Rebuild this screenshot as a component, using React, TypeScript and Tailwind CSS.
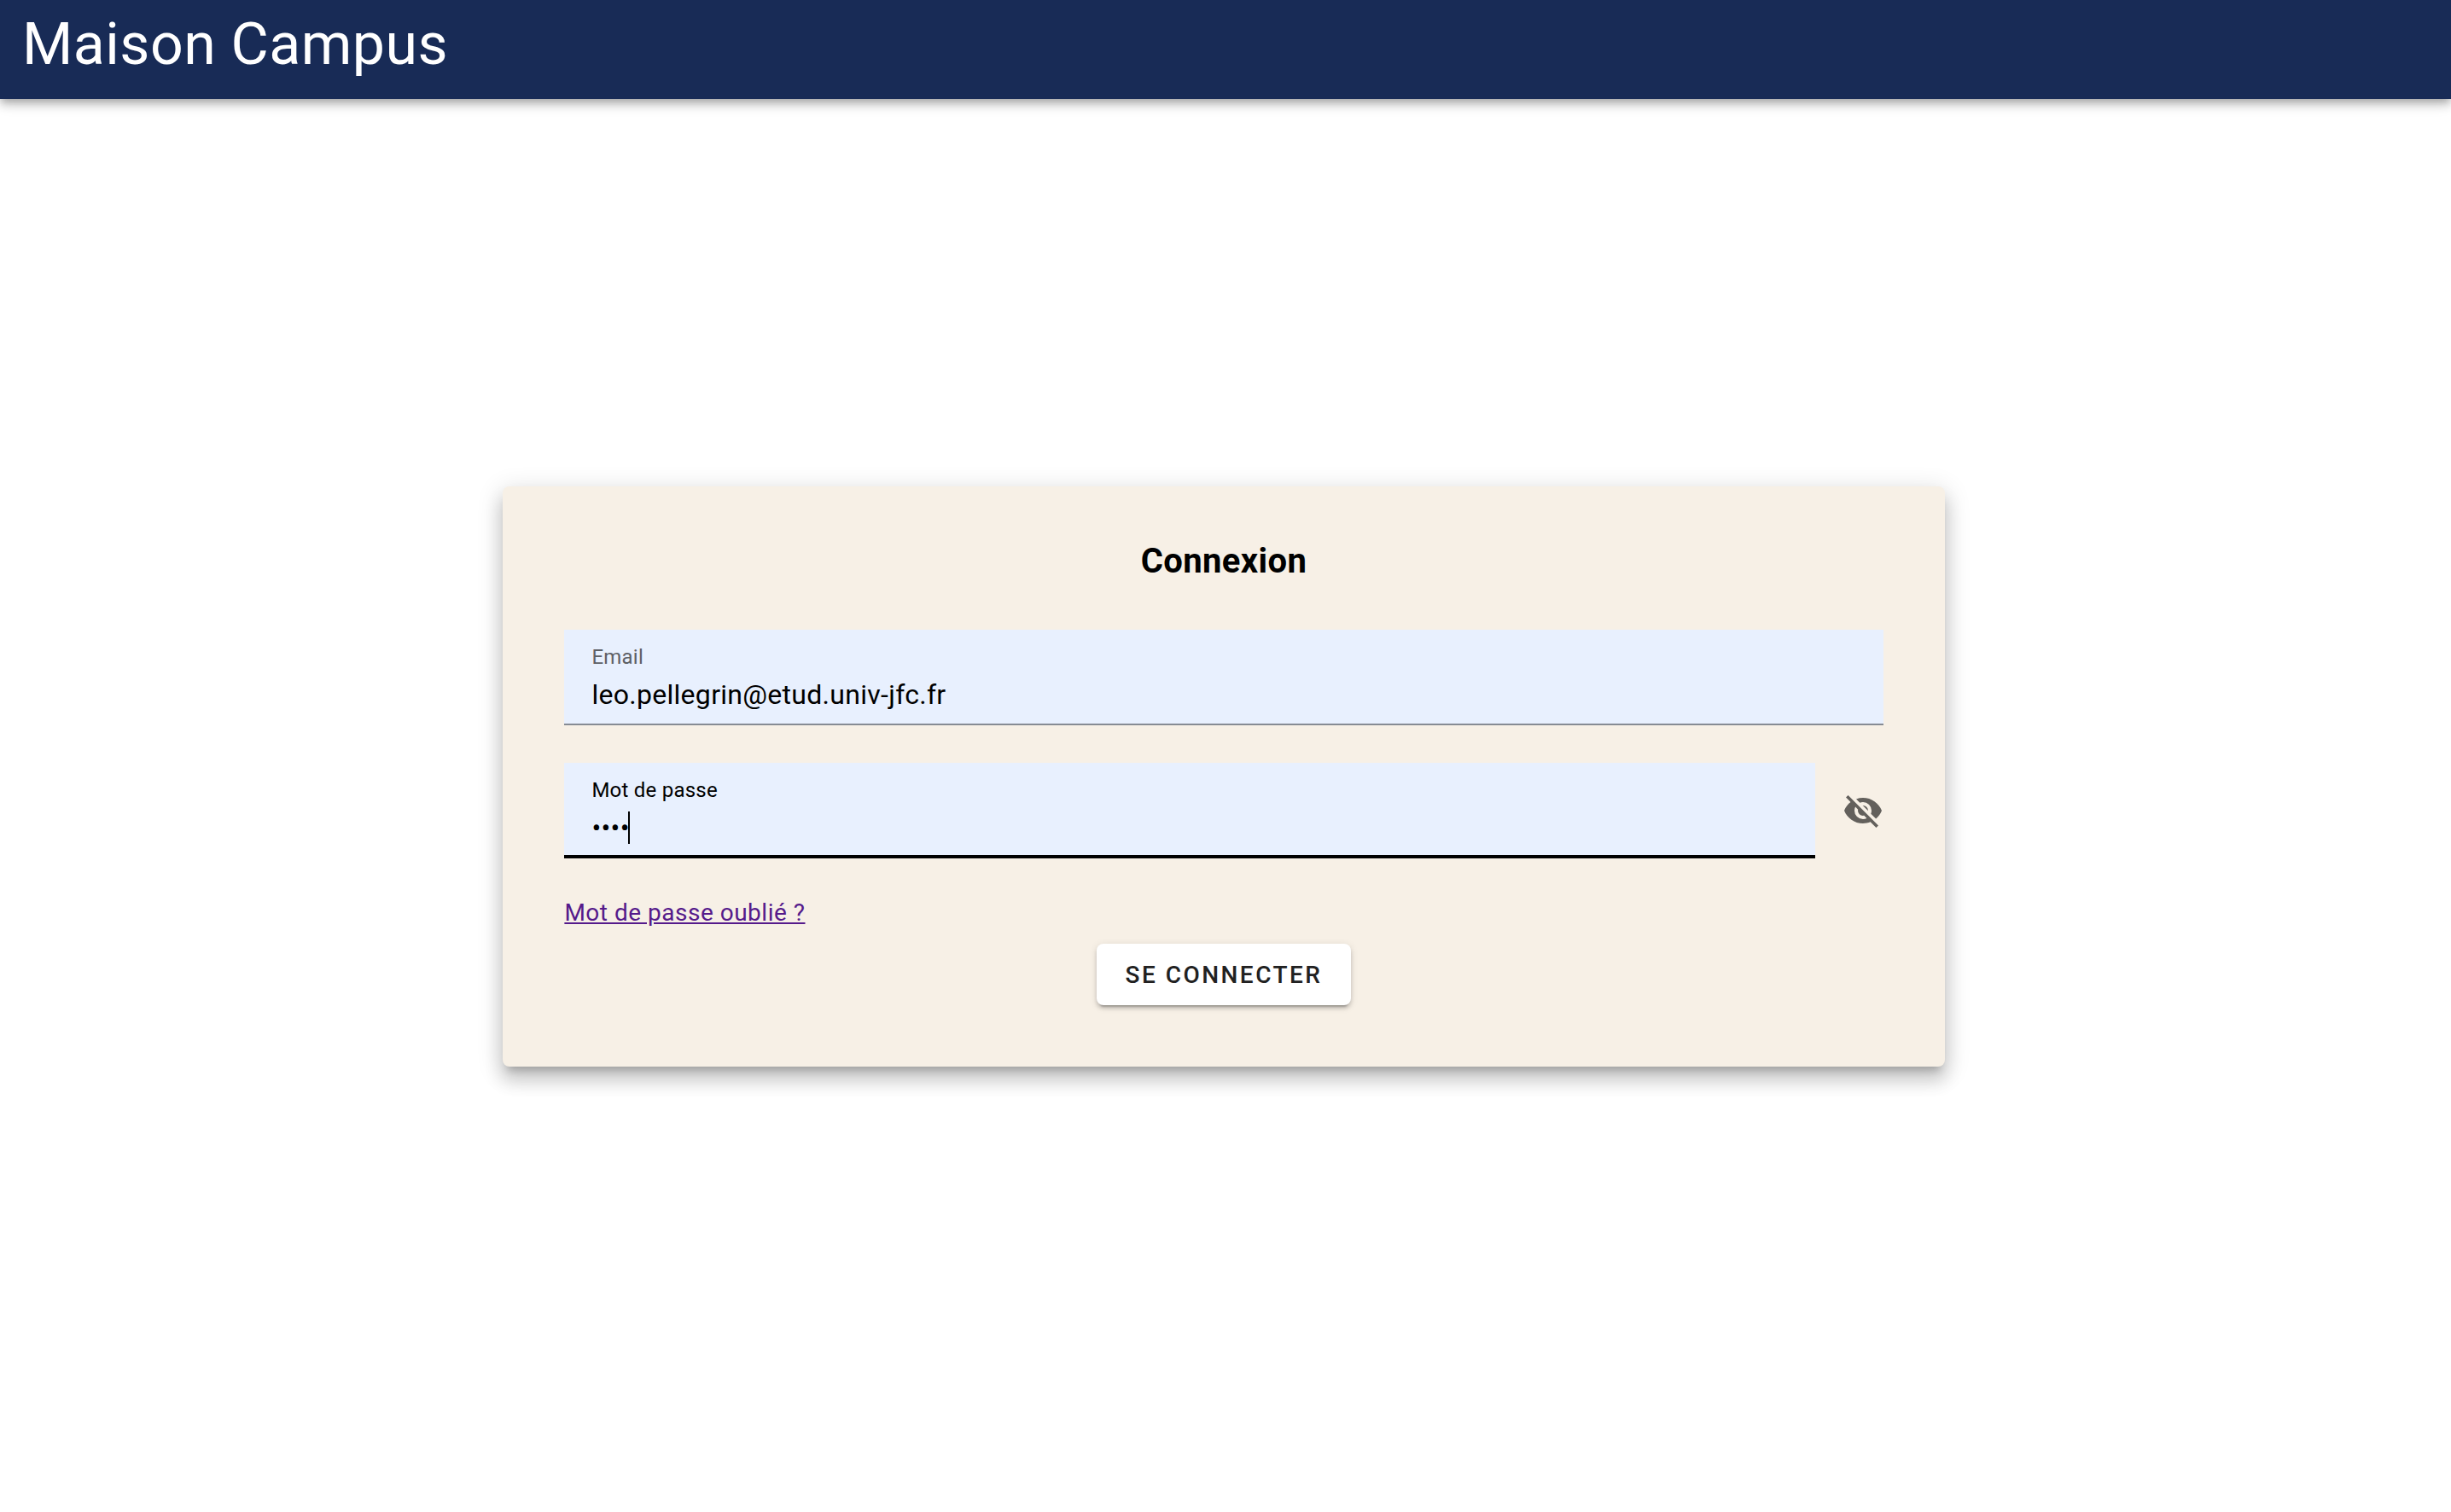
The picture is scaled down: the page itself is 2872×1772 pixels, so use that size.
import { useState } from "react";

function EyeOffIcon() {
  return (
    <svg viewBox="0 0 24 24" className="size-12" fill="currentColor" aria-hidden="true">
      <path d="M11.83,9L15,12.16C15,12.11 15,12.05 15,12A3,3 0 0,0 12,9C11.94,9 11.89,9 11.83,9M7.53,9.8L9.08,11.35C9.03,11.56 9,11.77 9,12A3,3 0 0,0 12,15C12.22,15 12.44,14.97 12.65,14.92L14.2,16.47C13.53,16.8 12.79,17 12,17A5,5 0 0,1 7,12C7,11.21 7.2,10.47 7.53,9.8M2,4.27L4.28,6.55L4.73,7C3.08,8.3 1.78,10 1,12C2.73,16.39 7,19.5 12,19.5C13.55,19.5 15.03,19.2 16.38,18.66L16.81,19.08L19.73,22L21,20.73L3.27,3M12,7A5,5 0 0,1 17,12C17,12.64 16.87,13.26 16.64,13.82L19.57,16.75C21.07,15.5 22.27,13.86 23,12C21.27,7.61 17,4.5 12,4.5C10.6,4.5 9.26,4.75 8,5.2L10.17,7.35C10.74,7.13 11.35,7 12,7Z" />
    </svg>
  );
}

export default function App() {
  const [email, setEmail] = useState("leo.pellegrin@etud.univ-jfc.fr");
  const [password, setPassword] = useState("abcd");
  const [visible, setVisible] = useState(false);

  return (
    <div className="flex min-h-screen flex-col bg-white font-['Roboto',sans-serif] text-black">
      <header className="bg-[#182b56] px-[26px] pt-3 pb-6 shadow-[0_4px_8px_-2px_rgba(0,0,0,0.2),0_8px_10px_0_rgba(0,0,0,0.14),0_2px_20px_0_rgba(0,0,0,0.12)]">
        <h1 className="text-[68px] leading-[80px] tracking-[0.007em] text-white">Maison Campus</h1>
      </header>

      <main className="flex justify-center pt-[454px] pr-1">
        <form
          className="flex w-[58.9%] flex-col rounded-lg bg-[#f7f0e6] px-[72px] pt-[58px] pb-[72px] shadow-[0_10px_10px_-6px_rgba(0,0,0,0.2),0_16px_20px_2px_rgba(0,0,0,0.14),0_6px_28px_4px_rgba(0,0,0,0.12)]"
          onSubmit={(e) => e.preventDefault()}
        >
          <h2 className="text-center text-[40px] leading-[60px] font-bold tracking-[0.01em]">Connexion</h2>

          <div className="mt-[50px] flex h-28 flex-col border-b-2 border-[#868b93] bg-[#e8f0fe] px-8 pt-4">
            <label htmlFor="email" className="text-2xl leading-8 tracking-[0.01em] text-[#5d6066]">
              Email
            </label>
            <input
              id="email"
              type="email"
              value={email}
              onChange={(e) => setEmail(e.target.value)}
              className="mt-2 h-10 w-full bg-transparent text-[32px] leading-10 tracking-[0.009em] outline-none"
            />
          </div>

          <div className="mt-11 flex items-center gap-8">
            <div className="flex h-28 flex-1 flex-col border-b-4 border-black bg-[#e8f0fe] px-8 pt-4">
              <label htmlFor="password" className="text-2xl leading-8 tracking-[0.01em]">
                Mot de passe
              </label>
              <div className="relative mt-2">
                <input
                  id="password"
                  type={visible ? "text" : "password"}
                  value={password}
                  onChange={(e) => setPassword(e.target.value)}
                  className="block h-10 w-full bg-transparent text-[32px] leading-10 tracking-[0.009em] caret-transparent outline-none"
                />
                <span className="absolute top-px left-[43px] h-[38px] w-0.5 bg-black" />
              </div>
            </div>
            <button
              type="button"
              aria-label="Afficher le mot de passe"
              className="text-[#63605c]"
              onClick={() => setVisible(!visible)}
            >
              <EyeOffIcon />
            </button>
          </div>

          <a href="#" className="mt-10 self-start text-[28px] leading-[48px] tracking-[0.018em] text-[#551a8b] underline">
            Mot de passe oublié ?
          </a>

          <button
            type="submit"
            className="mt-3 h-[72px] self-center rounded-lg bg-white px-[34px] pt-0.5 text-[28px] font-medium tracking-[0.088em] text-[#212121] uppercase shadow-[0_6px_2px_-4px_rgba(0,0,0,0.2),0_4px_4px_0_rgba(0,0,0,0.14),0_2px_10px_0_rgba(0,0,0,0.12)]"
          >
            Se connecter
          </button>
        </form>
      </main>
    </div>
  );
}
